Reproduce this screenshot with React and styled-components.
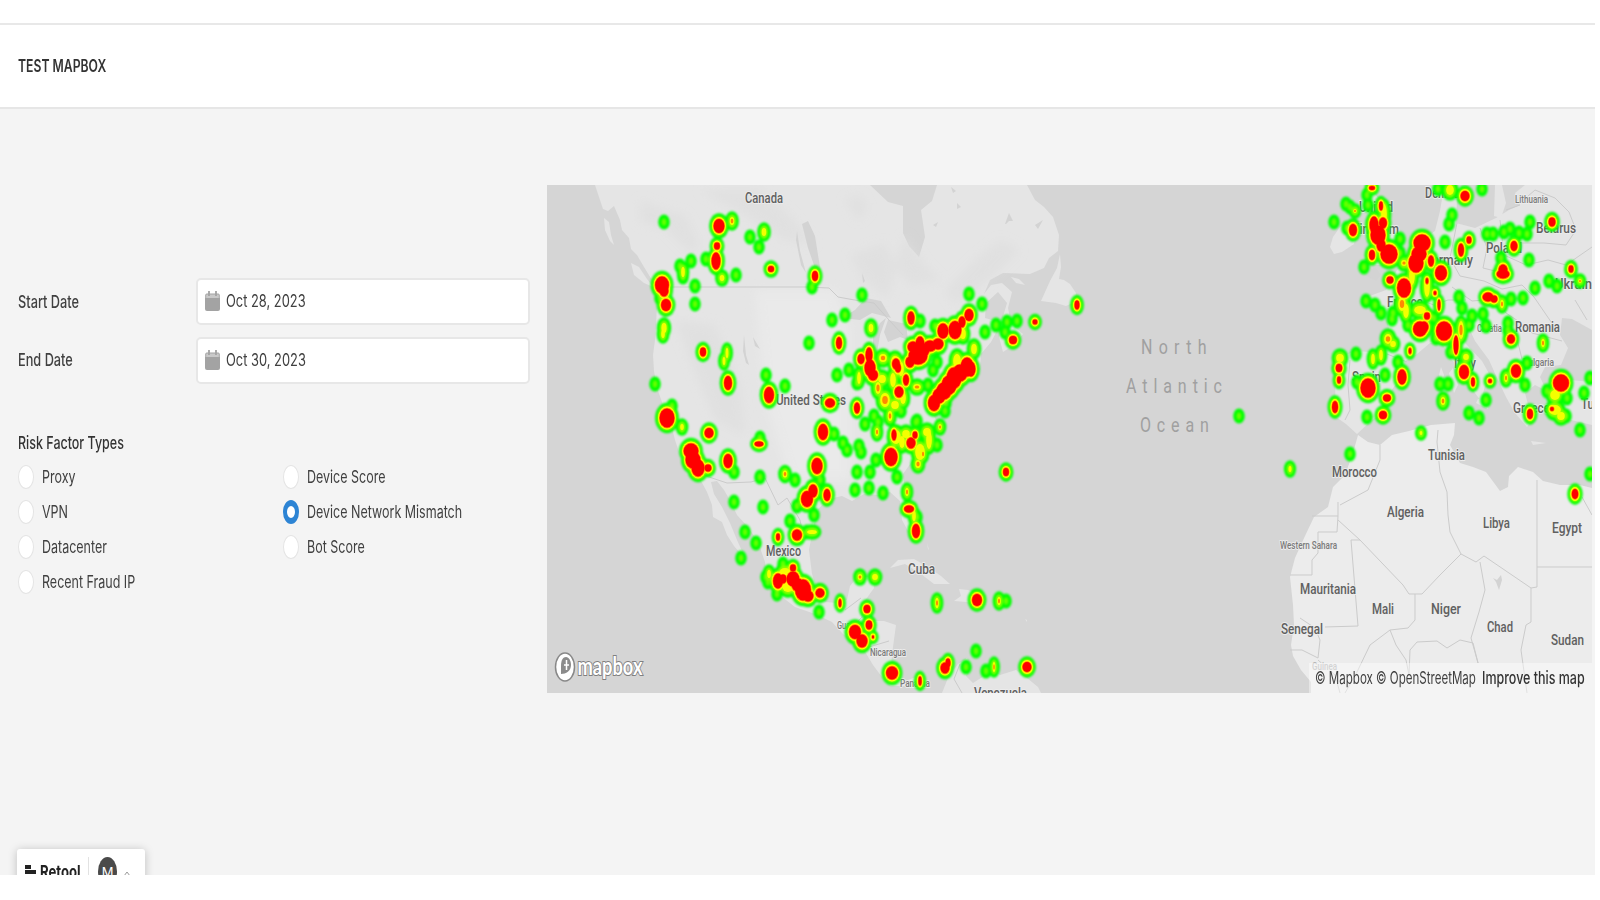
import React, { useState } from "react";
import styled, { createGlobalStyle } from "styled-components";

const GlobalStyle = createGlobalStyle`
  * { box-sizing: border-box; }
  html, body { margin: 0; background: #fff; overflow: hidden; }
  body { font-family: Inter, "Liberation Sans", sans-serif; color: #333; }
`;

const Page = styled.div`
  width: 1595px;
  height: 875px;
  overflow: hidden;
  display: flex;
  flex-direction: column;
  background: #f4f4f4;
`;
const TopStrip = styled.div`
  flex: none;
  height: 25px;
  background: #fff;
  border-bottom: 2px solid #e8e8e8;
`;
const Header = styled.header`
  flex: none;
  height: 84px;
  display: flex;
  align-items: center;
  padding: 0 18px 1px;
  background: #fff;
  border-bottom: 2px solid #e6e6e6;
`;
const Text = styled.span`
  display: inline-block;
  font-size: ${(p) => p.$size || 17}px;
  font-weight: ${(p) => p.$weight || 400};
  line-height: 22px;
  color: ${(p) => p.$color || "#404040"};
  white-space: nowrap;
  transform: scaleX(${(p) => p.$squeeze || 0.735});
  transform-origin: left center;
`;
const Main = styled.main`
  flex: 1;
  min-height: 0;
  display: flex;
  align-items: flex-start;
`;
const Controls = styled.section`
  width: 547px;
  padding: 169px 17px 0 18px;
`;
const Field = styled.div`
  display: flex;
  align-items: center;
  height: 47px;
  margin-bottom: 11.5px;
`;
const FieldLabel = styled.div`
  width: 178px;
  display: flex;
`;
const DateInput = styled.div`
  width: 335px;
  height: 47px;
  display: flex;
  align-items: center;
  gap: 6px;
  padding: 0 7px 1px;
  background: #fff;
  border: 2px solid #e7e7e7;
  border-radius: 5px;
`;
const GroupTitle = styled.div`
  display: flex;
  margin-top: 48px;
  height: 22px;
`;
const Options = styled.div`
  display: grid;
  grid-auto-flow: column;
  grid-template-columns: 265px 248px;
  grid-template-rows: repeat(4, 35.1px);
  margin-top: 6px;
`;
const Option = styled.label`
  display: flex;
  align-items: center;
  gap: 8px;
`;
const Dot = styled.span`
  flex: none;
  width: 16px;
  height: 24px;
  border-radius: 50%;
  background: #fff;
  border-style: solid;
  border-color: ${(p) => (p.$on ? "#2d84d4" : "#e4e4e4")};
  border-width: ${(p) => (p.$on ? "6px 4px" : "1px")};
`;
const MapFrame = styled.section`
  position: relative;
  flex: none;
  width: 1045px;
  height: 508px;
  margin-top: 76px;
  background: #d5d5d5;
  overflow: hidden;
  svg { display: block; }
`;
const Attribution = styled.div`
  position: absolute;
  right: 0;
  bottom: 0;
  width: 283px;
  height: 30px;
  display: flex;
  align-items: center;
  padding-left: 6px;
  background: rgba(255, 255, 255, 0.42);
`;
const Credit = styled.div`
  width: ${(p) => p.$width}px;
  display: flex;
`;
const Footer = styled.footer`
  flex: none;
  height: 26px;
  padding-left: 17px;
  display: flex;
`;
const Badge = styled.div`
  width: 128px;
  height: 50px;
  display: flex;
  align-items: flex-start;
  padding: 8px 0 0 8px;
  background: #fff;
  border-radius: 3px 3px 0 0;
  box-shadow: 0 1px 10px rgba(0, 0, 0, 0.22);
`;
const BadgeName = styled.div`
  width: 52px;
  padding: 4px 0 0 4px;
`;
const BadgeRule = styled.div`
  width: 1px;
  height: 36px;
  background: #e2e2e2;
  margin-right: 9px;
`;
const Avatar = styled.div`
  width: 19px;
  height: 29px;
  border-radius: 50%;
  background: #4a4a4a;
  color: #fff;
  font-size: 13px;
  line-height: 30px;
  text-align: center;
  margin-right: 6px;
`;

const CalendarIcon = () => (
  <svg width="15" height="22" viewBox="0 0 15 22">
    <path d="M1 4h13v4H1z" fill="#c9c9c9" />
    <path d="M0 8h15v11q0 2-2 2H2q-2 0-2-2z" fill="#a3a3a3" />
    <path d="M4 1v5M11 1v5" stroke="#a3a3a3" strokeWidth="1.8" />
    <path d="M.7 8V5q0-1 1-1h11.600q1 0 1 1v3" fill="none" stroke="#a3a3a3" strokeWidth="1" />
  </svg>
);
const RetoolMark = () => (
  <svg width="11" height="22" viewBox="0 0 11 22">
    <path d="M0 8h6v4H0zM0 13h11v4H0zM0 18h11v4H0z" fill="#222" />
  </svg>
);
const Caret = () => (
  <svg width="8" height="22" viewBox="0 0 8 22">
    <path d="M1 19l3-4 3 4" fill="none" stroke="#999" strokeWidth="1" />
  </svg>
);

const LAND = [
  // North and Central America
  "M595 185L599 197 603 209 608 211 614 206 620 220 622 230 629 238 631 249 637 255 644 267 652 280 656 290 657 305 656 325 655 340 653 355 654 371 657 388 662 402 666 414 672 428 675 440 680 455 690 468 700 479 707 492 712 505 713 517 722 522 727 535 734 546 740 553 742 551 737 540 730 523 722 507 714 494 711 482 717 481 724 490 731 502 737 515 748 527 758 542 765 562 767 580 777 593 795 607 815 614 832 622 843 634 853 642 864 650 873 665 882 677 891 686 905 686 917 680 927 687 930 684 921 675 908 680 896 680 891 665 893 647 896 625 884 621 867 621 861 617 864 602 874 588 873 578 858 576 850 586 847 600 838 603 825 602 818 592 812 574 809 550 813 528 818 509 829 499 842 496 852 501 864 494 878 495 890 492 900 501 902 520 908 531 914 530 912 510 905 491 903 474 913 460 924 449 936 438 939 425 931 411 940 398 955 387 968 377 980 367 981 354 991 342 998 329 992 320 985 318 986 303 998 292 1007 303 1002 320 999 337 1003 352 1014 345 1023 334 1011 324 1008 308 1012 292 1002 283 991 285 984 294 990 280 1003 273 1030 274 1044 268 1049 258 1058 251 1059 235 1053 217 1044 207 1035 200 1027 185L937 185 932 201 921 210 925 237 919 257 909 246 903 233 903 206 888 202 870 185z",
  "M604 218L609 222 611 235 614 245 610 241 605 230z",
  "M631 263L639 267 647 279 653 287 644 283 634 275z",
  "M1060 254L1057 268 1050 281 1041 301 1056 303 1066 306 1075 302 1076 293 1070 284 1064 280 1059 279 1061 267z",
  "M1011 277l8 2 6 6-9-2z",
  "M890 568L898 560 914 559 928 567 941 576 950 584 934 584 921 574 905 564z",
  "M959 589l9 1 7 3 10 8-10 3-8-2-13-1 7-5z",
  "M927 543l2 7-1-1zM1025 619l2 1v2z",
  // South America
  "M942 693L948 678 958 664 967 658 970 665 966 676 973 683 984 676 990 669 1000 675 1016 670 1027 678 1038 687 1041 693z",
  // British Isles and Ireland
  "M1363 190L1372 190 1384 206 1385 217 1393 229 1400 247 1393 260 1380 265 1363 264 1374 250 1366 239 1375 222 1362 207z",
  "M1330 247L1333 237 1340 227 1350 222 1357 230 1354 244 1342 252 1334 254z",
  // Mainland Europe and Turkey
  "M1592 245L1592 330 1572 319 1562 318 1560 335 1568 348 1561 365 1545 367 1540 377 1546 390 1560 379 1592 382V425L1571 420 1552 413 1549 392 1535 385 1525 393 1532 420 1527 427 1515 413 1506 397 1498 380 1489 360 1475 341 1469 328 1460 331 1466 344 1482 361 1492 379 1485 386 1481 401 1475 393 1465 375 1451 359 1442 343 1430 343 1417 354 1405 361 1401 378 1390 392 1387 410 1372 420 1357 434 1346 424 1336 417 1335 380 1337 359 1355 351 1385 353 1391 336 1386 317 1375 309 1367 297 1386 290 1397 270 1413 258 1421 241 1435 231 1440 211 1443 193 1457 198 1456 223 1475 228 1496 218 1509 210 1520 205 1515 193 1525 185H1592z",
  "M1502 185l4 18-5 15-7-2 1-31zM1453 368l5 17-4 8-5-20zM1478 399l12 0-2 10-12-6zM1531 441l15 2-13 2zM1441 367l3 8-3 9-2-9z",
  // Africa
  "M1358 435L1368 442 1380 445 1392 435 1409 431 1431 425 1455 423 1454 435 1450 445 1460 463 1473 467 1486 472 1500 491 1508 487 1509 476 1518 467 1533 472 1543 481 1560 485 1580 485 1592 488V693H1311V682L1301 670 1293 656 1291 645 1294 625 1293 605 1290 577 1295 558 1305 536 1314 517 1328 507 1333 487 1345 475 1353 453z",
];

const SHADES = [
  "M640 200l25 10 20 5 15 30-10 8-25-25-25-5zM700 190l60 0 30 25 25 30-30-5-50-30zM850 255l35-12 12 25-10 30-25-20zM905 235l20 30 15 15-30 5-15-20z",
  "M675 320l40 5 25 60 5 50-30-15-25-60zM945 290l30-30 25-20 20 10-25 25-40 30zM845 200l15-5 8 15-10 10z",
];
const PLAINS = "M755 290L835 290 850 330 850 480 790 480 765 400z";

const WATER = [
  "M802 224L808 221 815 236 818 255 821 273 815 268 808 248z",
  "M797 231l3 20 6 22-5-8-5-25z",
  "M842 318L855 310 866 298 881 301 891 318 872 313 860 320z",
  "M873 337l7-14 6-5-6 17-3 18-4-3zM888 320l18 4 2 16-8-3-12 5-4-10z",
  "M902 366l17-9 3 3-18 9zM917 348l19-4-2 5-15 3z",
  "M957 203l4 4-4 2zM1005 224l4-11 4 8-4 0-3 3zM933 225l5-3-2 5zM1035 225l8-5-5 9zM951 187l5 4-3 2z",
  "M1365 275l10-8 6 8-5 6zM1376 300l3 5-2 3z",
  "M1493 578l4 2 4-5 1 5-3 10-3-8z",
  "M744 335l2 20 3 10-3-2-3-12zM753 337l7 12-5-3zM862 273l3 8-2 2z",
];

const BORDERS = [
  "M662 287H806L829 288 838 297 860 301 874 303 889 320 903 335",
  "M706 476L727 483 751 482 765 478 778 505 787 498 800 520 803 535",
  "M845 610l16-12M858 621l10-10M869 647l20-6M960 664l-6 15 8 14",
  "M1338 502V516H1312M1338 516L1337 532H1318V553L1312 560V575H1290M1338 520L1360 540H1351L1358 626 1325 627",
  "M1360 540L1403 585 1409 594H1422L1440 575 1461 554 1450 532 1448 515 1447 492 1440 472 1437 442 1438 430",
  "M1380 445V460L1368 490 1340 505M1461 554L1476 562 1484 556 1531 588 1537 587V480M1537 567H1592M1531 588V622L1526 625 1521 650 1527 693",
  "M1415 594V620L1408 628 1390 630 1370 645 1357 672 1345 693M1390 630L1396 645 1406 660 1409 675 1410 650 1417 642 1437 641 1447 648 1460 640 1473 643 1478 663M1480 562L1485 590 1479 612 1471 638 1478 663",
  "M1290 650L1302 650 1318 658 1320 640 1315 628 1300 618M1340 693L1335 675 1318 660",
  "M1520 203l15-13 20 8 14 14 7 18-10 15-22-2-26 0M1520 205l-14 5M1500 220l4 35 22 10 22-5 18 5 26-18M1480 228l7 20-4 20 20 5",
  "M1457 223l-7 35 10 18 24 5 18 8 20-4 12 12 24 35M1420 300l14 5 14-5 18 0M1452 287l20 14 24-2 10 14 12 8 14 12 30 8M1505 325l12 14 5 20 18 5",
  "M1350 360l-2 25 2 25-5 10M1387 354l20 8M1592 515l-10-18M1575 300l12 20",
];

// name, x, baseline, width, size, fill
const LABELS = [
  ["Canada", 745, 203, 38, 15], ["United States", 776, 405, 70, 15], ["Mexico", 766, 556, 35, 15],
  ["Cuba", 908, 574, 27, 15], ["Guatemala", 837, 629, 36, 11], ["Nicaragua", 870, 656, 36, 11],
  ["Panama", 900, 687, 30, 11], ["Venezuela", 974, 698, 53, 15],
  ["Lithuania", 1515, 203, 33, 11], ["Belarus", 1536, 233, 40, 15], ["Poland", 1486, 253, 36, 15],
  ["Germany", 1424, 265, 49, 15], ["United", 1359, 212, 34, 15], ["Kingdom", 1352, 234, 47, 15],
  ["Denmark", 1425, 198, 44, 15], ["Ukraine", 1555, 289, 44, 15], ["France", 1387, 307, 36, 15],
  ["Croatia", 1477, 332, 25, 11], ["Romania", 1515, 332, 45, 15], ["Bulgaria", 1523, 366, 31, 11],
  ["Italy", 1454, 368, 22, 15], ["Spain", 1352, 382, 29, 15], ["Greece", 1513, 413, 37, 15],
  ["Turkey", 1581, 409, 35, 15], ["Tunisia", 1428, 460, 37, 15], ["Morocco", 1332, 477, 45, 15],
  ["Algeria", 1387, 517, 37, 15], ["Libya", 1483, 528, 27, 15], ["Egypt", 1552, 533, 30, 15],
  ["Western Sahara", 1280, 549, 57, 11], ["Mauritania", 1300, 594, 56, 15], ["Mali", 1372, 614, 22, 15],
  ["Niger", 1431, 614, 30, 15], ["Senegal", 1281, 634, 42, 15], ["Chad", 1487, 632, 26, 15],
  ["Sudan", 1551, 645, 33, 15], ["Guinea", 1312, 670, 25, 11, "#b4b4b4"],
];

// Light activity: [x, y]
const LOW = [
  [664,222],[750,237],[759,247],[691,261],[680,266],[683,277],[695,286],[695,304],[736,275],[706,259],[655,384],[766,375],[785,386],[809,343],[760,438],[660,298],[812,287],[672,406],
  [862,295],[969,294],[982,304],[832,320],[845,315],[920,321],[996,325],[1007,322],[1017,321],[985,332],[837,375],[849,370],[857,383],[933,370],[937,362],[928,385],[834,434],[917,421],[945,411],[874,416],[865,424],[901,411],[946,403],[1005,332],[935,326],
  [734,472],[760,477],[795,480],[734,502],[763,507],[745,532],[756,543],[741,558],[790,521],[814,515],[797,506],[768,582],[777,594],[819,612],[843,443],[847,450],[859,446],[861,452],[857,472],[870,472],[855,490],[869,488],[820,480],[783,564],[876,460],[807,532],[766,577],
  [883,493],[897,477],[937,445],[1006,601],[976,651],[966,667],[986,671],[916,422],[878,422],[917,517],
  [1334,222],[1346,204],[1350,207],[1367,195],[1368,205],[1400,239],[1449,224],[1452,215],[1445,242],[1487,234],[1493,234],[1504,232],[1510,229],[1519,233],[1530,222],[1527,234],[1529,260],[1535,288],[1549,281],[1557,286],[1364,267],[1438,189],[1482,189],[1501,258],[1511,299],[1523,298],[1459,297],[1366,301],[1347,228],[1400,253],
  [1375,305],[1381,313],[1393,313],[1392,319],[1408,325],[1462,308],[1472,316],[1469,325],[1483,314],[1486,326],[1508,323],[1508,330],[1356,354],[1385,375],[1357,382],[1398,362],[1440,384],[1448,384],[1469,413],[1479,418],[1486,400],[1525,385],[1527,363],[1547,391],[1567,398],[1584,393],[1590,378],[1580,430],[1367,417],[1350,454],[1590,474],[1239,416],[1566,416],[1451,352],[1436,338],[1434,318]
];
// Medium activity: [x, y, rx, ry, warm]
const MID = [
  [732,221,1.5,3,1],[764,232,1.5,3],[722,278,1.5,2],[664,328,1.8,4],[663,334,1,3],[727,353,.6,4],[724,361,.6,3],[682,427,1,2],[683,272,1,4],
  [871,328,1.5,3],[974,349,2,4],[883,358,3,3,1],[859,378,1,5],[878,388,2,5,1],[885,400,4,6,1],[882,379,3,3],[890,416,1.5,4,1],[917,387,3,2,1],[940,427,1,2,1],[877,432,1,3,1],[893,380,2,6],[903,398,2,5],[901,369,2,6],[895,405,3,3],[963,334,2,4],[957,361,3,6],[895,361,3,4],[938,395,2,3],
  [785,474,1.5,2.5,1],[812,532,4,1],[860,577,1.5,2,1],[875,577,2,2],[769,574,1,3],[785,573,5,4],[788,586,5,5],
  [927,432,3,3],[929,440,2,8],[920,452,4,7],[918,464,2,3,1],[923,454,1,3,1],[907,492,1,3,1],[902,442,2,5],[937,603,1,4,1],[999,601,1,3,1],[994,667,.6,4,1],[914,516,1,4],[896,437,4,6],[906,434,3,3],
  [1355,211,1,1,1],[1450,190,3,4],[1404,263,2,2,1],[1580,281,1,1,1],[1502,304,1,3,1],[1427,287,2,9],[1412,276,2,8],[1384,214,2,9],
  [1402,304,3,6,1],[1406,311,2,6],[1420,310,5,3],[1388,339,3,4,1],[1393,344,2,2],[1381,355,1,4],[1373,359,1,4],[1443,401,1.5,3,1],[1506,378,1,3,1],[1543,343,1,3,1],[1461,330,2,8,1],[1466,357,2,2],[1555,410,5,4],[1561,416,3,3],[1340,358,3,3],[1290,469,.7,2],[1421,433,.6,1],[1555,395,4,4]
];
// Heavy activity: [x, y, rx, ry]
const HIGH = [
  [719,226,5,6.5],[717,246,2.5,3],[716,261,4,8],[662,285,6.5,8],[664,291,4,5],[666,305,4.5,5.5],[703,352,2.6,4],[728,383,3.5,6.5],[769,395,4.5,7.5],[667,418,7,9],[771,269,2.6,2.5],[815,276,2.6,4.5],[709,433,4,4.5],
  [911,318,3,6],[969,315,4,5.5],[943,331,5,7],[955,330,6,8.5],[962,322,3,5],[1035,322,2,2],[1077,305,2,4],[1013,340,3.5,3.5],[839,343,2.5,5.5],[861,359,3,4.5],[869,355,3,7],[870,368,5,8],[873,375,4.5,5],[896,364,3.5,5],[898,368,2.5,4],[906,380,2.5,5],[899,392,4,5],[857,408,2.5,5],[830,403,4.5,4],[823,432,4.5,7.5],
  [913,347,5,5],[920,344,4,7],[918,356,9,8],[910,362,4,5],[930,346,6,5],[938,344,5,5],[924,350,5,6],[934,403,5.5,7.5],[939,396,6,7],[944,391,7,8],[949,385,7,9],[954,378,7,10],[960,373,7,8],[967,367,6,9],[971,369,4,7],
  [691,451,7,7],[693,460,7,8],[698,468,6,8],[708,468,3,3],[728,461,4,6.5],[759,444,4,2],[817,466,5,7.5],[813,491,4,6],[807,499,5.5,7.5],[827,495,3,5.5],[778,537,1.5,3],[797,535,4.5,5],[793,568,2.5,3],[778,581,4.5,7],[783,579,3,4],[793,579,6,7],[803,590,7.5,10],[808,596,5,5],[798,585,6,6],[820,593,4,4],[840,603,1,3.5],[867,609,3,3.5],[869,625,2.8,4],[855,632,5.5,6.5],[862,641,5,6],[873,637,.7,1],
  [894,435,2,5],[891,457,6,8.5],[911,443,4,5],[915,435,2,3],[1006,472,2.5,3.5],[909,509,4.5,3],[916,531,3.5,6.5],[977,600,4.5,5.5],[1027,667,4,4.5],[945,668,4,5],[948,663,2,4],[892,673,5.5,6],[920,681,1.2,4],
  [1372,188,2.5,1.5],[1353,230,3.5,5.5],[1381,206,1.5,4],[1374,225,4,8],[1383,223,3.5,5],[1378,235,7,9],[1381,245,4,6],[1389,254,8,9],[1372,255,2.5,4.5],[1390,280,3,3],[1404,288,6.5,9],[1422,243,8,8],[1419,254,7,7],[1416,263,7,9],[1431,261,2.5,5],[1441,273,5.5,7],[1465,196,4,4.5],[1461,250,2.5,6],[1469,240,2,3],[1514,246,3,4.5],[1552,222,3,4],[1503,270,4,5],[1503,274,6,4],[1488,297,5,4],[1494,299,3,3],[1571,269,2,3],[1439,305,1,5],[1427,281,1,2.5],[1435,293,1,1.5],
  [1420,329,6.5,7],[1424,327,4,5],[1444,331,7.5,9],[1427,316,2.5,3],[1456,345,2,9],[1410,351,1,2.5],[1339,368,2.8,3.5],[1339,380,1.5,3],[1335,407,2.6,5.5],[1368,388,7,9],[1387,398,3.5,3],[1383,415,3.5,3.5],[1402,377,4,7],[1464,372,4.5,6.5],[1473,382,1.5,4],[1490,381,1.5,1.5],[1511,339,3.5,4],[1516,371,4.5,6],[1561,383,7.5,8],[1530,414,2.5,4.5],[1552,409,1.5,1.5],[1575,494,2.8,4.5]
];

const Spots = ({ data, dx, dy, fill }) => (
  <g fill={fill}>
    {data.map(([x, y, rx = 0, ry = 0], i) => (
      <ellipse key={i} cx={x} cy={y} rx={rx + dx} ry={ry + dy} />
    ))}
  </g>
);

const WARM = MID.filter((p) => p[4]).map(([x, y, a, b]) => [x, y, a * 0.6, b * 0.6]);

const Heat = () => (
  <g>
    <defs>
      <filter id="halo" x="-5%" y="-5%" width="110%" height="110%"><feGaussianBlur stdDeviation="0.9" /></filter>
      <filter id="core" x="-5%" y="-5%" width="110%" height="110%"><feGaussianBlur stdDeviation="0.7" /></filter>
    </defs>
    <g filter="url(#halo)">
      <Spots data={LOW} dx={5.8} dy={7.6} fill="#00ff00" />
      <Spots data={MID} dx={5.4} dy={6.8} fill="#00ff00" />
      <Spots data={HIGH} dx={4.9} dy={6.2} fill="#00ff00" />
    </g>
    <g filter="url(#halo)">
      <Spots data={LOW} dx={2.4} dy={3.6} fill="#66ff00" />
      <Spots data={MID} dx={2.6} dy={3.6} fill="#8cff00" />
      <Spots data={HIGH} dx={2.6} dy={3.2} fill="#b4ff00" />
    </g>
    <g filter="url(#core)">
      <Spots data={MID} dx={0.8} dy={1} fill="#f4ff00" />
      <Spots data={HIGH} dx={1.9} dy={2.4} fill="#ffff00" />
      <Spots data={HIGH} dx={1} dy={1.3} fill="#ff8a00" />
      <Spots data={WARM} dx={0.4} dy={0.4} fill="#ff8800" />
    </g>
    <Spots data={HIGH} dx={0.4} dy={0.4} fill="#ff0000" />
  </g>
);

const WorldMap = () => (
  <svg width="1045" height="508" viewBox="547 185 1045 508">
    <rect x="547" y="185" width="1045" height="508" fill="#d5d5d5" />
    {LAND.map((d, i) => (
      <path key={i} d={d} fill={i === LAND.length - 1 ? "#ececec" : "#e5e5e5"} strokeLinejoin="round" />
    ))}
    <g filter="url(#relief)">
      {SHADES.map((d) => <path key={d} d={d} fill="#dedede" opacity="0.6" />)}
      <path d={PLAINS} fill="#ebebeb" opacity="0.8" />
    </g>
    <filter id="relief" x="-5%" y="-5%" width="110%" height="110%"><feGaussianBlur stdDeviation="5" /></filter>
    {WATER.map((d) => <path key={d} d={d} fill="#d3d3d3" />)}
    {BORDERS.map((d) => <path key={d} d={d} fill="none" stroke="#cbcbcb" strokeWidth="1" />)}
    <g fontFamily='Roboto, "Liberation Sans", sans-serif' fontWeight="500" stroke="#ececec" strokeWidth="2" paintOrder="stroke" strokeLinejoin="round">
      {LABELS.map(([name, x, y, w, size, fill = size < 12 ? "#7a7a7a" : "#606060"]) => (
        <text key={name} x={x} y={y} fontSize={size} fill={fill} textLength={w} lengthAdjust="spacingAndGlyphs">{name}</text>
      ))}
    </g>
    <g fontFamily='Roboto, "Liberation Sans", sans-serif' fontSize="20" fill="#a0a0a0">
      <text transform="translate(1141 354) scale(.8 1)" textLength="82">North</text>
      <text transform="translate(1126 393) scale(.8 1)" textLength="120">Atlantic</text>
      <text transform="translate(1140 432) scale(.8 1)" textLength="86">Ocean</text>
    </g>
    <Heat />
    <ellipse cx="565" cy="667" rx="9.5" ry="14" fill="#fff" stroke="#888" strokeWidth="1.5" />
    <path d="M561 674V666C561 660 563 657 566 657C569 657 571 661 571 665C571 671 566 674 561 674z" fill="#8b8b8b" />
    <path d="M566.500 660v10M564 665h5" stroke="#fff" strokeWidth="1.5" />
    <text x="577.5" y="675" fontFamily="Lato, sans-serif" fontWeight="700" fontSize="24" fill="#fff" stroke="#808080" strokeWidth="2" paintOrder="stroke" textLength="65" lengthAdjust="spacingAndGlyphs">mapbox</text>
  </svg>
);

const RISKS = ["Proxy", "VPN", "Datacenter", "Recent Fraud IP", "Device Score", "Device Network Mismatch", "Bot Score"];

export default function App() {
  const [risk, setRisk] = useState("Device Network Mismatch");
  return (
    <>
      <GlobalStyle />
      <Page>
        <TopStrip />
        <Header><Text $weight={600} $color="#333" $squeeze={0.718}>TEST MAPBOX</Text></Header>
        <Main>
          <Controls>
            {[["Start Date", "Oct 28, 2023"], ["End Date", "Oct 30, 2023"]].map(([label, value]) => (
              <Field key={label}>
                <FieldLabel><Text $weight={500} $squeeze={0.75}>{label}</Text></FieldLabel>
                <DateInput><CalendarIcon /><Text $squeeze={0.757}>{value}</Text></DateInput>
              </Field>
            ))}
            <GroupTitle><Text $weight={500} $color="#333">Risk Factor Types</Text></GroupTitle>
            <Options>
              {RISKS.map((name) => (
                <Option key={name} onClick={() => setRisk(name)}>
                  <Dot $on={risk === name} />
                  <Text>{name}</Text>
                </Option>
              ))}
            </Options>
          </Controls>
          <MapFrame>
            <WorldMap />
            <Attribution>
              <Credit $width={61}><Text $squeeze={0.68}>© Mapbox</Text></Credit>
              <Credit $width={106}><Text $squeeze={0.68}>© OpenStreetMap</Text></Credit>
              <Credit $width={104}><Text $weight={500} $color="#333" $squeeze={0.735}>Improve this map</Text></Credit>
            </Attribution>
          </MapFrame>
        </Main>
        <Footer>
          <Badge>
            <RetoolMark />
            <BadgeName><Text $size={18} $weight={700} $color="#222" $squeeze={0.73}>Retool</Text></BadgeName>
            <BadgeRule />
            <Avatar>M</Avatar>
            <Caret />
          </Badge>
        </Footer>
      </Page>
    </>
  );
}
